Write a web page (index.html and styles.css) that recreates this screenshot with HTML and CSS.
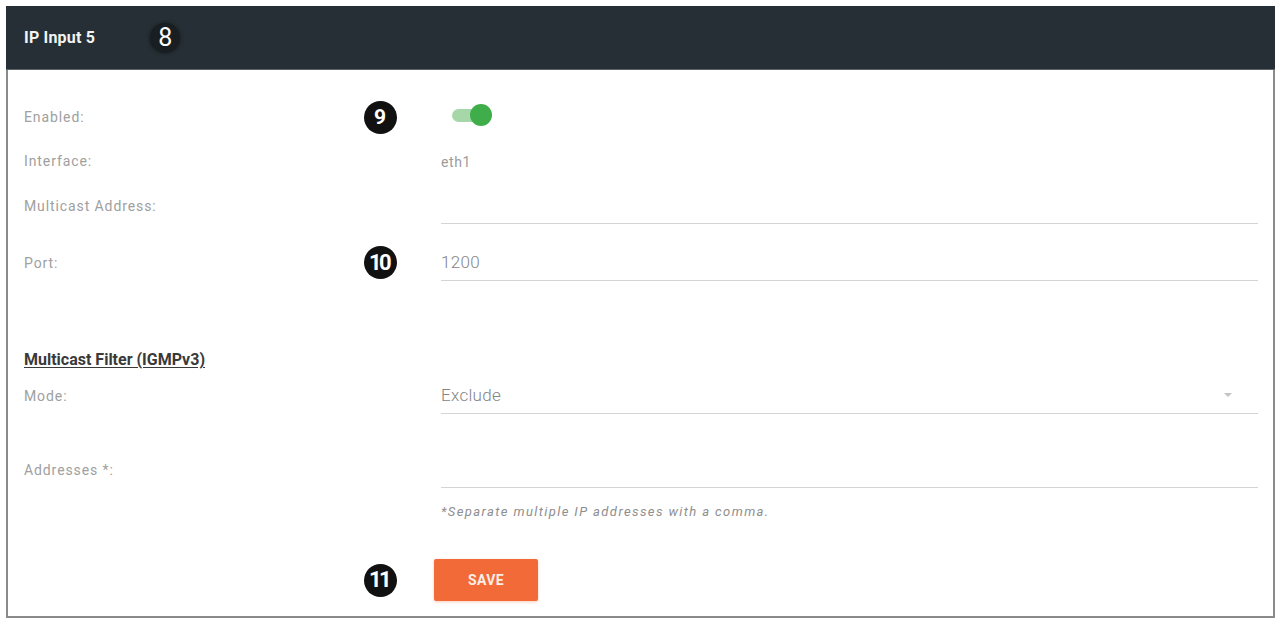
FILE: index.html
```html
<!DOCTYPE html>
<html lang="en">
<head>
<meta charset="utf-8">
<title>IP Input 5</title>
<link rel="stylesheet" href="styles.css">
</head>
<body>
<section class="panel">
  <header class="panel-header">
    <h1 class="panel-title">IP Input 5</h1>
    <span class="callout callout-dark">8</span>
  </header>

  <form class="panel-body">
    <div class="row row-toggle">
      <label class="label">Enabled:</label>
      <span class="marker"><span class="callout">9</span></span>
      <div class="value">
        <span class="switch"><span class="switch-track"></span><span class="switch-knob"></span></span>
      </div>
    </div>

    <div class="row row-text">
      <label class="label">Interface:</label>
      <span class="marker"></span>
      <div class="value"><span class="static">eth1</span></div>
    </div>

    <div class="row row-field row-multicast">
      <label class="label">Multicast Address:</label>
      <span class="marker"></span>
      <div class="value field"></div>
    </div>

    <div class="row row-field row-port">
      <label class="label">Port:</label>
      <span class="marker"><span class="callout callout-wide">10</span></span>
      <div class="value field"><span class="field-text">1200</span></div>
    </div>

    <h2 class="section-title">Multicast Filter (IGMPv3)</h2>

    <div class="row row-field row-mode">
      <label class="label">Mode:</label>
      <span class="marker"></span>
      <div class="value field select">
        <span class="field-text">Exclude</span>
        <span class="caret"></span>
      </div>
    </div>

    <div class="row row-field row-addresses">
      <label class="label">Addresses *:</label>
      <span class="marker"></span>
      <div class="value field"></div>
    </div>

    <div class="row row-hint">
      <span class="label"></span>
      <span class="marker"></span>
      <p class="value hint">*Separate multiple IP addresses with a comma.</p>
    </div>

    <div class="row row-actions">
      <span class="label"></span>
      <span class="marker"><span class="callout callout-wide">11</span></span>
      <div class="actions"><button type="button" class="btn-save">SAVE</button></div>
    </div>
  </form>
</section>
</body>
</html>
```

FILE: styles.css
```css
* {
  box-sizing: border-box;
}

html, body {
  margin: 0;
  padding: 0;
  background: #ffffff;
}

body {
  font-family: Roboto, "Liberation Sans", Arial, sans-serif;
  color: #9a9a9a;
  width: 1276px;
  height: 620px;
  overflow: hidden;
}

.panel {
  margin: 6px 0 0 6px;
  width: 1269px;
}

/* dark title bar */
.panel-header {
  height: 64px;
  background: #262f35;
  border-bottom: 1px solid #5d6468;
  display: flex;
  align-items: center;
  padding-left: 18px;
}

.panel-title {
  margin: 0;
  font-size: 16px;
  font-weight: 700;
  color: #f2f4f4;
  letter-spacing: 0.2px;
}

.callout {
  display: inline-flex;
  align-items: center;
  justify-content: center;
  width: 33px;
  height: 33px;
  border-radius: 50%;
  background: #111111;
  color: #ffffff;
  font-size: 21px;
  font-weight: 700;
  line-height: 1;
}

.callout-wide {
  font-size: 22px;
  letter-spacing: -2.5px;
  padding-right: 2px;
}

.callout-dark {
  margin-left: 55px;
  width: 30px;
  height: 30px;
  background: #181e21;
  font-size: 25px;
  font-weight: 400;
  box-shadow: 0 0 3px 1px #1c2326;
}

/* form body */
.panel-body {
  border-left: 2px solid #8a8a8a;
  border-right: 2px solid #8a8a8a;
  border-bottom: 2px solid #8a8a8a;
  padding: 29px 15px 15px 16px;
  display: flex;
  flex-direction: column;
}

.row {
  display: flex;
  align-items: center;
}

.label {
  width: 339px;
  flex: none;
  font-size: 14px;
  color: #a0a0a0;
  letter-spacing: 0.9px;
}

.marker {
  width: 34px;
  flex: none;
  display: flex;
  justify-content: center;
}

.value {
  flex: 1;
  margin-left: 44px;
}

.row-toggle {
  height: 36px;
}

.row-text {
  height: 36px;
  margin-top: 8px;
}

.static {
  font-size: 14px;
  color: #9c9c9c;
  letter-spacing: 0.6px;
}

.row-field {
  height: 37px;
}

.field {
  height: 100%;
  border-bottom: 1px solid #d4d4d4;
  display: flex;
  align-items: center;
}

.field-text {
  font-size: 17px;
  color: #858585;
  font-weight: 300;
  letter-spacing: 0.3px;
}

.row-multicast {
  margin-top: 8px;
}

.row-port {
  margin-top: 20px;
}

.section-title {
  margin: 68px 0 0 0;
  height: 22px;
  line-height: 22px;
  font-size: 16px;
  font-weight: 700;
  color: #3a3a3a;
  text-decoration: underline;
  text-underline-offset: 2px;
  letter-spacing: 0;
}

.row-mode {
  margin-top: 6px;
}

.select {
  justify-content: space-between;
  padding-right: 26px;
}

.caret {
  width: 0;
  height: 0;
  border-left: 4px solid transparent;
  border-right: 4px solid transparent;
  border-top: 4px solid #c4c4c4;
}

.row-addresses {
  margin-top: 37px;
}

.row-hint {
  margin-top: 13px;
  height: 20px;
}

.hint {
  margin-top: 0;
  margin-bottom: 0;
  font-size: 13px;
  font-style: italic;
  color: #8e8e8e;
  letter-spacing: 1.4px;
}

.row-actions {
  margin-top: 38px;
  height: 42px;
}

.actions {
  margin-left: 37px;
}

.btn-save {
  width: 104px;
  height: 42px;
  border: none;
  border-radius: 2px;
  background: #f16a38;
  color: #fbeee4;
  font-family: Roboto, "Liberation Sans", Arial, sans-serif;
  font-size: 14px;
  font-weight: 700;
  letter-spacing: 0.4px;
  box-shadow: 0 1px 3px rgba(241, 106, 56, 0.35);
}

/* on/off switch */
.switch {
  position: relative;
  display: inline-block;
  width: 42px;
  height: 22px;
  margin-left: 11px;
}

.switch-track {
  position: absolute;
  left: 0;
  top: 5px;
  width: 34px;
  height: 13px;
  border-radius: 7px;
  background: #a6d7a8;
}

.switch-knob {
  position: absolute;
  left: 18px;
  top: 0;
  width: 22px;
  height: 22px;
  border-radius: 50%;
  background: #3fae4a;
}
```
